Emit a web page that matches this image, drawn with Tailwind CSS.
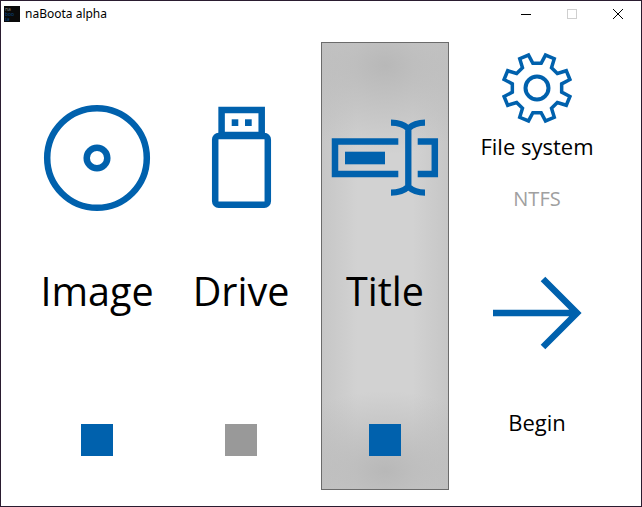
<!DOCTYPE html>
<html>
<head>
<meta charset="utf-8">
<title>naBoota alpha</title>
<script src="https://cdn.jsdelivr.net/npm/@tailwindcss/browser@4"></script>
</head>
<body class="bg-white">
<div class="w-[642px] h-[507px] overflow-hidden flex flex-col bg-white border border-[#2a1c30] font-['Open_Sans','Noto_Sans',sans-serif] text-black">
  <header class="h-[29px] shrink-0 flex items-center pl-[3px]">
    <div class="w-4 h-4 bg-[#0a0a0a] flex flex-col justify-center overflow-hidden mb-[3px]">
      <span class="text-[5px] leading-[5px] text-[#8a8a8a] pl-px">na</span>
      <span class="text-[5px] leading-[5px] text-[#0a4a90] pl-px">boo</span>
      <span class="text-[5px] leading-[5px] text-[#0a4a90] pl-px">ta</span>
    </div>
    <span class="ml-[5px] text-[12px] leading-none font-['Noto_Sans',sans-serif] mb-[3px]">naBoota alpha</span>
    <div class="ml-auto flex items-center mb-[3px]">
      <svg class="w-[46px] h-[16px]" viewBox="0 0 46 16"><path d="M18 8.5H28" stroke="#000" stroke-width="1"/></svg>
      <svg class="w-[46px] h-[16px]" viewBox="0 0 46 16"><rect x="18.5" y="3.5" width="9" height="9" fill="none" stroke="#cfcfcf"/></svg>
      <svg class="w-[46px] h-[16px]" viewBox="0 0 46 16"><path d="M18 3L28 13M28 3L18 13" stroke="#000" stroke-width="1"/></svg>
    </div>
  </header>
  <main class="flex-1 flex pl-[24px] pt-[12px] pb-[16px] min-h-0">
    <section class="w-[144px] flex flex-col items-center">
      <svg class="mt-[52px] w-[128px] h-[128px] shrink-0" viewBox="0 0 128 128">
        <circle cx="64" cy="64" r="49.8" fill="none" stroke="#0061ad" stroke-width="6.5"/>
        <circle cx="64" cy="64" r="10.3" fill="none" stroke="#0061ad" stroke-width="6.5"/>
      </svg>
      <div class="mt-[44px] text-[39.5px] leading-[50px]">Image</div>
      <div class="mt-[108px] w-8 h-8 bg-[#0061ad]"></div>
    </section>
    <section class="w-[144px] flex flex-col items-center">
      <svg class="mt-[52px] w-[128px] h-[128px] shrink-0" viewBox="0 0 128 128">
        <rect x="44.6" y="16" width="40.100" height="25" fill="none" stroke="#0061ad" stroke-width="6.5"/>
        <rect x="38.2" y="42" width="52.6" height="68.800" rx="3.5" fill="#fff" stroke="#0061ad" stroke-width="6.5"/>
        <rect x="54.7" y="25.3" width="6.6" height="6.7" fill="#0061ad"/>
        <rect x="68" y="25.3" width="6.7" height="6.7" fill="#0061ad"/>
      </svg>
      <div class="mt-[44px] text-[39.5px] leading-[50px]">Drive</div>
      <div class="mt-[108px] w-8 h-8 bg-[#999999]"></div>
    </section>
    <section class="w-[144px] flex flex-col items-center">
      <div class="w-[128px] h-full border border-[#6b6b6b] flex flex-col items-center bg-[radial-gradient(ellipse_95%_20%_at_50%_5%,#b8b8b8,transparent),radial-gradient(ellipse_95%_18%_at_50%_96%,#b8b8b8,transparent),linear-gradient(to_right,#c6c6c6,transparent_28%,transparent_72%,#c6c6c6),linear-gradient(#d2d2d2,#d2d2d2)]">
        <svg class="mt-[51px] w-[126px] h-[128px] shrink-0" viewBox="0 0 126 128" fill="#0061ad">
          <path d="M76.3 47.6H13V80H76.3" fill="none" stroke="#0061ad" stroke-width="6.5"/>
          <rect x="23" y="57.700" width="40" height="12.6"/>
          <path d="M95.700 47.6H112.800V80H95.700" fill="none" stroke="#0061ad" stroke-width="6.5"/>
          <path d="M69 28.600C77 28.600 82 30.500 86.300 34.500C90.600 30.500 95.600 28.600 103 28.600M69 98.600C77 98.600 82 96.700 86.300 92.700C90.600 96.700 95.600 98.600 103 98.600M86.300 32V95" fill="none" stroke="#0061ad" stroke-width="6.300"/>
        </svg>
        <div class="mt-[44px] text-[39.5px] leading-[50px]">Title</div>
        <div class="mt-[108px] w-8 h-8 bg-[#0061ad]"></div>
      </div>
    </section>
    <section class="w-[160px] flex flex-col items-center">
      <svg class="mt-[6px] w-[80px] h-[80px] shrink-0" viewBox="-40 -40 80 80">
        <path d="M4.13 -24.66L8.51 -32.92L17.26 -29.3L14.52 -20.35L20.35 -14.52L29.3 -17.26L32.92 -8.51L24.66 -4.13L24.66 4.13L32.92 8.51L29.3 17.26L20.35 14.52L14.52 20.35L17.26 29.3L8.51 32.92L4.13 24.66L-4.13 24.66L-8.51 32.92L-17.26 29.3L-14.52 20.35L-20.35 14.52L-29.3 17.26L-32.92 8.51L-24.66 4.13L-24.66 -4.13L-32.92 -8.51L-29.3 -17.26L-20.35 -14.52L-14.52 -20.35L-17.26 -29.3L-8.51 -32.92L-4.13 -24.66Z" fill="none" stroke="#0061ad" stroke-width="3.5"/>
        <circle cx="0" cy="0" r="11.500" fill="none" stroke="#0061ad" stroke-width="4"/>
      </svg>
      <div class="mt-[3px] text-[22px] leading-[30px]">File system</div>
      <div class="mt-[24px] text-[20px] leading-[28px] text-[#a0a0a0]">NTFS</div>
      <svg class="mt-[60px] w-[100px] h-[80px] shrink-0" viewBox="0 0 100 80">
        <path d="M6 40H90M56 6L90 40L56 74" fill="none" stroke="#0061ad" stroke-width="6.500"/>
      </svg>
      <div class="mt-[54px] text-[22px] leading-[30px]">Begin</div>
    </section>
  </main>
</div>
</body>
</html>
